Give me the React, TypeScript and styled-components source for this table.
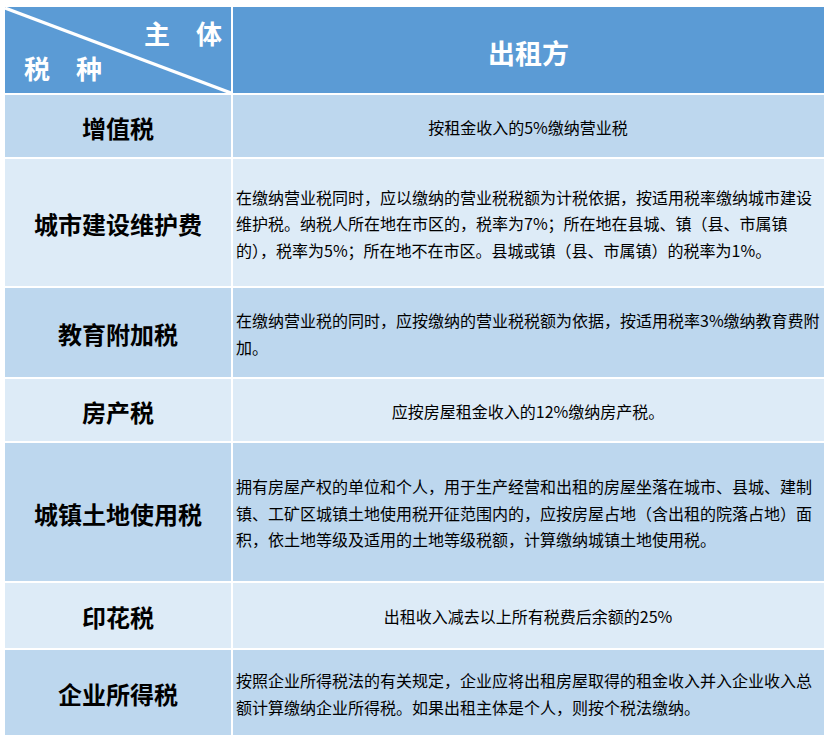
import styled, { createGlobalStyle } from "styled-components";

const GlobalStyle = createGlobalStyle`
  html, body {
    margin: 0;
    padding: 0;
    background: #ffffff;
  }
  body {
    font-family: "Microsoft YaHei", "Noto Sans CJK SC", "Noto Sans", sans-serif;
    color: #000000;
  }
`;

const Page = styled.div`
  padding: 7px 6px 0 5px;
  width: 819px;
`;

const Table = styled.div`
  display: flex;
  flex-direction: column;
  gap: 2px;
  background: #ffffff;
`;

const Row = styled.div<{ h: number; tone: "head" | "dark" | "light" }>`
  display: grid;
  grid-template-columns: 226px 591px;
  column-gap: 2px;
  height: ${(p) => p.h}px;
  & > div {
    background: ${(p) =>
      p.tone === "head" ? "#5b9bd5" : p.tone === "dark" ? "#bdd7ee" : "#ddebf7"};
  }
`;

const CornerCell = styled.div`
  position: relative;
  overflow: hidden;
  color: #ffffff;
  font-weight: 700;
  font-size: 26px;
  svg {
    position: absolute;
    inset: 0;
  }
`;

const CornerLabel = styled.div<{ side: "top" | "bottom" }>`
  position: absolute;
  display: flex;
  gap: 26px;
  line-height: 1;
  ${(p) => (p.side === "top" ? "right: 9px; top: 13px;" : "left: 19px; top: 48px;")}
`;

const HeadTitle = styled.div`
  display: flex;
  align-items: center;
  justify-content: center;
  color: #ffffff;
  font-weight: 700;
  font-size: 27px;
  padding-top: 4px;
`;

const TaxName = styled.div`
  display: flex;
  align-items: center;
  justify-content: center;
  font-weight: 700;
  font-size: 24px;
  padding-top: 2px;
`;

const Detail = styled.div<{ center?: boolean }>`
  display: flex;
  flex-direction: column;
  justify-content: center;
  align-items: ${(p) => (p.center ? "center" : "flex-start")};
  padding: 2px 4px 0 3px;
  font-size: 16px;
  line-height: 26.5px;
  white-space: nowrap;
`;

type Item = {
  name: string;
  lines: string[];
  h: number;
  center?: boolean;
};

const items: Item[] = [
  { name: "增值税", lines: ["按租金收入的5%缴纳营业税"], h: 62, center: true },
  {
    name: "城市建设维护费",
    lines: [
      "在缴纳营业税同时，应以缴纳的营业税税额为计税依据，按适用税率缴纳城市建设",
      "维护税。纳税人所在地在市区的，税率为7%；所在地在县城、镇（县、市属镇",
      "的），税率为5%；所在地不在市区。县城或镇（县、市属镇）的税率为1%。",
    ],
    h: 127,
  },
  {
    name: "教育附加税",
    lines: [
      "在缴纳营业税的同时，应按缴纳的营业税税额为依据，按适用税率3%缴纳教育费附",
      "加。",
    ],
    h: 89,
  },
  { name: "房产税", lines: ["应按房屋租金收入的12%缴纳房产税。"], h: 62, center: true },
  {
    name: "城镇土地使用税",
    lines: [
      "拥有房屋产权的单位和个人，用于生产经营和出租的房屋坐落在城市、县城、建制",
      "镇、工矿区城镇土地使用税开征范围内的，应按房屋占地（含出租的院落占地）面",
      "积，依土地等级及适用的土地等级税额，计算缴纳城镇土地使用税。",
    ],
    h: 138,
  },
  { name: "印花税", lines: ["出租收入减去以上所有税费后余额的25%"], h: 65, center: true },
  {
    name: "企业所得税",
    lines: [
      "按照企业所得税法的有关规定，企业应将出租房屋取得的租金收入并入企业收入总",
      "额计算缴纳企业所得税。如果出租主体是个人，则按个税法缴纳。",
    ],
    h: 85,
  },
];

export default function App() {
  return (
    <Page>
      <GlobalStyle />
      <Table>
        <Row h={86} tone="head">
          <CornerCell>
            <svg width="226" height="86" viewBox="0 0 226 86">
              <line x1="0" y1="1" x2="226" y2="86" stroke="#ffffff" strokeWidth="3.2" />
            </svg>
            <CornerLabel side="top">
              <span>主</span>
              <span>体</span>
            </CornerLabel>
            <CornerLabel side="bottom">
              <span>税</span>
              <span>种</span>
            </CornerLabel>
          </CornerCell>
          <HeadTitle>出租方</HeadTitle>
        </Row>
        {items.map((it, i) => (
          <Row key={it.name} h={it.h} tone={i % 2 === 0 ? "dark" : "light"}>
            <TaxName>{it.name}</TaxName>
            <Detail center={it.center}>
              {it.lines.map((l) => (
                <span key={l}>{l}</span>
              ))}
            </Detail>
          </Row>
        ))}
      </Table>
    </Page>
  );
}
